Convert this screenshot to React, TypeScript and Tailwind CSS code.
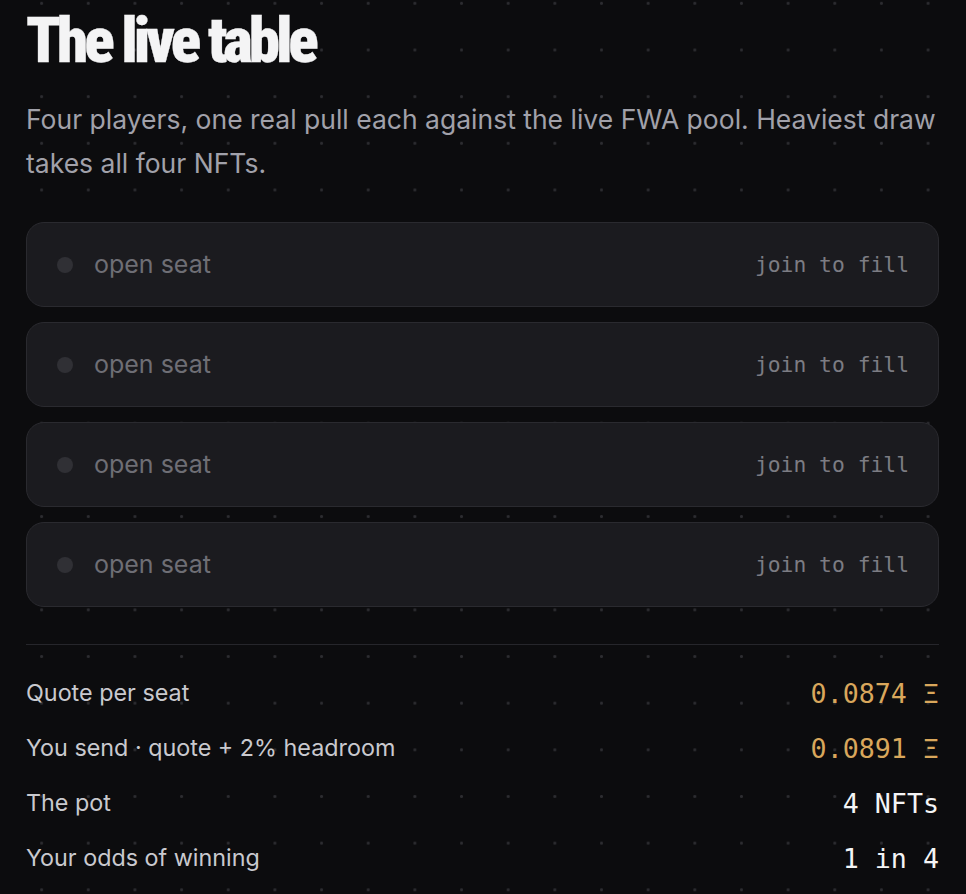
import React from "react";

const seats = [0, 1, 2, 3];

const summary = [
  { label: "Quote per seat", value: "0.0874 Ξ", accent: true },
  { label: "You send · quote + 2% headroom", value: "0.0891 Ξ", accent: true },
  { label: "The pot", value: "4 NFTs", accent: false },
  { label: "Your odds of winning", value: "1 in 4", accent: false },
];

const sans = "font-['Inter','Liberation_Sans',sans-serif]";
const mono = "font-['DejaVu_Sans_Mono','Liberation_Mono',monospace]";

export default function App() {
  return (
    <div className="min-h-screen w-full bg-[#0c0c0e] bg-[radial-gradient(circle,#2c2c30_1.3px,transparent_1.6px)] bg-[length:46.67px_46.67px] bg-[position:18.3px_-20px] text-[#f4f4f5]">
      <div className="w-[913px] ml-[26px] pt-[9px]">
        {/* Heading */}
        <h1 className="font-['Roboto','Open_Sans',sans-serif] font-black font-stretch-[75%] text-[63px] leading-none tracking-[-4px] [-webkit-text-stroke:0.3px_#f4f4f5] text-[#f4f4f5]">
          The live table
        </h1>
        <p className={`${sans} mt-[25px] text-[26.5px] leading-[44px] text-[#a1a1aa]`}>
          Four players, one real pull each against the live FWA pool. Heaviest draw takes all four NFTs.
        </p>

        {/* Seats */}
        <div className="mt-[37px] flex flex-col gap-[15px]">
          {seats.map((s) => (
            <div
              key={s}
              className="h-[85px] rounded-[18px] border border-[#2a2a2f] bg-[#1b1b1f] flex items-center pl-[30px] pr-[29px]"
            >
              <span className="w-[16px] h-[16px] rounded-full bg-[#303035]" />
              <span className={`${sans} ml-[21px] text-[25px] text-[#6e6e75]`}>open seat</span>
              <span className={`${mono} ml-auto text-[21.33px] text-[#7c7c83]`}>join to fill</span>
            </div>
          ))}
        </div>

        {/* Summary */}
        <div className="mt-[37px] border-t border-[#26262b] pt-[21px]">
          {summary.map((row) => (
            <div key={row.label} className="h-[55px] flex items-center justify-between">
              <span className={`${sans} text-[23.33px] text-[#c9c9ce]`}>{row.label}</span>
              <span className={`${mono} text-[26.67px] ${row.accent ? "text-[#d9a75c]" : "text-[#f4f4f5]"}`}>
                {row.value}
              </span>
            </div>
          ))}
        </div>
      </div>
    </div>
  );
}
